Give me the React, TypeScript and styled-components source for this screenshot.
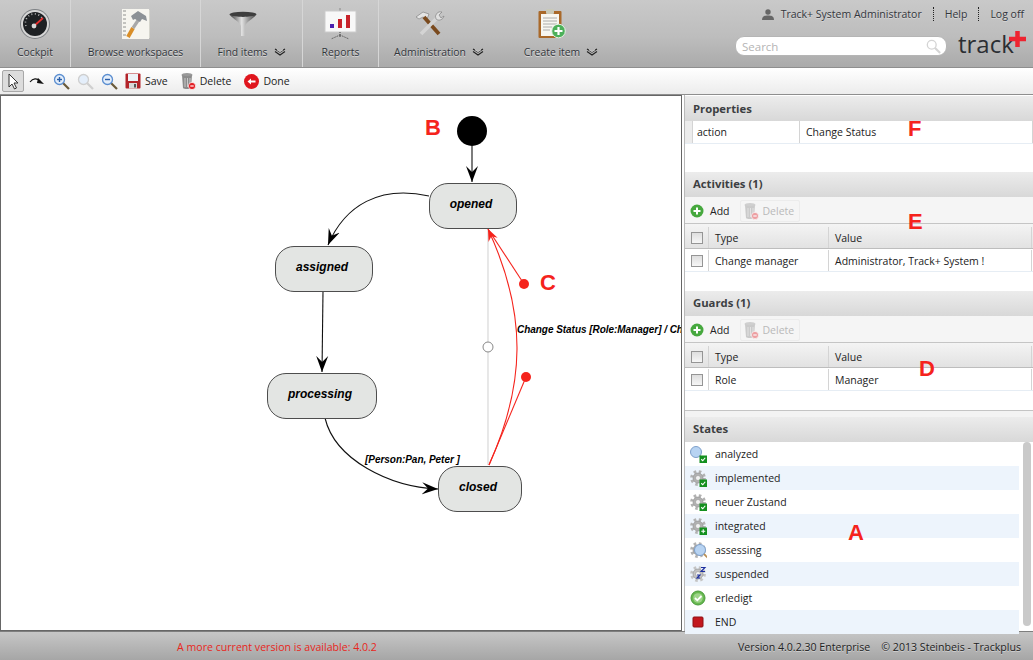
import React from 'react';
import styled, { createGlobalStyle } from 'styled-components';

const GlobalStyle = createGlobalStyle`
  html, body {
    margin: 0;
    padding: 0;
    background: #fff;
  }
  body {
    font-family: "Open Sans", "Liberation Sans", sans-serif;
    font-size: 10.5px;
    color: #222;
  }
`;

const Page = styled.div`
  width: 1033px;
  height: 660px;
  display: flex;
  flex-direction: column;
  overflow: hidden;
`;

/* top bar */
const Header = styled.header`
  height: 67px;
  flex: none;
  display: flex;
  justify-content: space-between;
  background: linear-gradient(#c9c9c9, #bdbdbd 55%, #aaaaaa);
  border-bottom: 1px solid #8e8e8e;
`;

const Nav = styled.nav`
  display: flex;
`;

const NavItem = styled.div<{ $w: number; $sep?: boolean }>`
  width: ${(p) => p.$w}px;
  display: flex;
  flex-direction: column;
  align-items: center;
  box-sizing: border-box;
  padding-top: 8px;
  border-right: ${(p) => (p.$sep ? '1px solid #d6d6d6' : 'none')};
  color: #33363c;
  font-size: 10.4px;
  text-shadow: 0 1px 0 #d8d8d8;
`;

const NavIcon = styled.div<{ $menu?: boolean }>`
  height: 32px;
  display: flex;
  align-items: center;
  justify-content: center;
  padding-right: ${(p) => (p.$menu ? '18px' : '0')};
`;

const NavLabel = styled.div`
  margin-top: 4px;
  height: 16px;
  line-height: 16px;
  display: flex;
  align-items: center;
  gap: 6px;
  white-space: nowrap;
`;

const HeaderRight = styled.div`
  width: 298px;
  display: flex;
  flex-direction: column;
  align-items: flex-end;
  padding-right: 9px;
  box-sizing: border-box;
`;

const UserBar = styled.div`
  display: flex;
  align-items: center;
  height: 14px;
  margin-top: 7px;
  color: #33363c;
  font-size: 10.5px;
  text-shadow: 0 1px 0 #d8d8d8;
`;

const UserLink = styled.span<{ $divider?: boolean }>`
  padding-left: ${(p) => (p.$divider ? '11px' : '0')};
  margin-left: ${(p) => (p.$divider ? '11px' : '0')};
  border-left: ${(p) => (p.$divider ? '1px dotted #222' : 'none')};
  display: flex;
  align-items: center;
  gap: 7px;
`;

const SearchRow = styled.div`
  display: flex;
  align-items: flex-start;
  margin-top: 15px;
  margin-right: -2px;
`;

const SearchBox = styled.div`
  width: 212px;
  height: 20px;
  box-sizing: border-box;
  background: #fff;
  border: 1px solid #b5b5b5;
  border-radius: 9px;
  display: flex;
  align-items: center;
  justify-content: space-between;
  padding: 0 5px 0 6px;
  color: #b4b4b4;
  font-size: 11.5px;
`;

const Logo = styled.div`
  position: relative;
  width: 68px;
  height: 24px;
  margin: -4px 0 0 11px;
  color: #2b2e33;
  font-family: "Open Sans", sans-serif;
  font-size: 24px;
  line-height: 24px;
`;

const LogoPlus = styled.svg`
  position: absolute;
  right: 0;
  top: -1px;
`;

/* second bar */
const SubBar = styled.div`
  height: 27px;
  flex: none;
  display: flex;
  align-items: center;
  padding-left: 2px;
  background: linear-gradient(#ffffff, #ececec);
  border-bottom: 1px solid #8e8e8e;
  box-sizing: border-box;
`;

const ToolBtn = styled.div<{ $active?: boolean }>`
  height: 22px;
  width: ${(p) => (p.$active ? '22px' : '24px')};
  margin-right: ${(p) => (p.$active ? '1px' : '0')};
  box-sizing: border-box;
  display: flex;
  align-items: center;
  justify-content: center;
  border: 1px solid ${(p) => (p.$active ? '#a8a8a8' : 'transparent')};
  border-radius: 2px;
  background: ${(p) => (p.$active ? '#dcdcdc' : 'transparent')};
`;

const TextTool = styled.div<{ $left: number }>`
  height: 22px;
  display: flex;
  align-items: center;
  gap: 4px;
  padding: 0 6px 0 ${(p) => p.$left}px;
  font-size: 10.5px;
  color: #222;
`;

const Main = styled.div`
  flex: 1;
  min-height: 0;
  display: flex;
`;

/* diagram */
const Canvas = styled.div`
  position: relative;
  width: 682px;
  flex: none;
  background: #fff;
  border: 1px solid #666;
  box-sizing: border-box;
  overflow: hidden;
`;

const Edges = styled.svg`
  position: absolute;
  left: 0;
  top: 0;
`;

const StateNode = styled.div<{ $x: number; $y: number; $w: number }>`
  position: absolute;
  left: ${(p) => p.$x}px;
  top: ${(p) => p.$y}px;
  width: ${(p) => p.$w}px;
  height: 46px;
  box-sizing: border-box;
  display: flex;
  align-items: center;
  justify-content: center;
  padding: 0 4px 5px 0;
  background: #e3e5e3;
  border: 1.5px solid #4d4d4d;
  border-radius: 19px;
  font-family: "Liberation Sans", sans-serif;
  font-style: italic;
  font-weight: 700;
  font-size: 12px;
  color: #000;
`;

const EdgeLabel = styled.div<{ $x: number; $y: number; $clip?: boolean }>`
  position: absolute;
  left: ${(p) => p.$x}px;
  top: ${(p) => p.$y}px;
  right: ${(p) => (p.$clip ? '0' : 'auto')};
  overflow: ${(p) => (p.$clip ? 'hidden' : 'visible')};
  font-family: "Liberation Sans", sans-serif;
  font-style: italic;
  font-weight: 700;
  font-size: 10px;
  line-height: 12px;
  letter-spacing: -0.04px;
  white-space: nowrap;
  color: #000;
`;

const Marker = styled.div<{ $x: number; $y: number }>`
  position: absolute;
  left: ${(p) => p.$x}px;
  top: ${(p) => p.$y}px;
  font-family: "Liberation Sans", sans-serif;
  font-weight: 700;
  font-size: 22px;
  line-height: 24px;
  color: #f5231c;
  z-index: 2;
`;

/* right side */
const Side = styled.aside`
  width: 349px;
  margin-left: 2px;
  padding-top: 1px;
  flex: none;
  display: flex;
  flex-direction: column;
  background: #fff;
  border-left: 1px solid #b9b9b9;
  box-sizing: border-box;
`;

const Panel = styled.section<{ $h: number; $rule?: boolean }>`
  height: ${(p) => p.$h}px;
  flex: none;
  box-sizing: border-box;
  display: flex;
  flex-direction: column;
  border-top: ${(p) => (p.$rule ? '1px solid #c4c4c4' : 'none')};
  background: ${(p) => (p.$rule ? '#f3f3f3' : '#fff')};
`;

const PanelHead = styled.div<{ $flat?: boolean }>`
  height: 25px;
  flex: none;
  box-sizing: border-box;
  padding: 0 0 ${(p) => (p.$flat ? '0' : '2px')} 8px;
  display: flex;
  align-items: center;
  font-weight: 700;
  font-size: 11.3px;
  color: #3d3f42;
  background: linear-gradient(#ececec, #d8d8d8);
`;

const PanelTools = styled.div`
  height: 26px;
  flex: none;
  display: flex;
  align-items: center;
  padding: 1px 0 0 4px;
  gap: 9px;
  box-sizing: border-box;
  background: #f5f5f5;
`;

const PanelBtn = styled.div<{ $off?: boolean }>`
  height: 22px;
  box-sizing: border-box;
  display: flex;
  align-items: center;
  gap: ${(p) => (p.$off ? '4px' : '6px')};
  padding: 0 ${(p) => (p.$off ? '5px' : '0')} 0 ${(p) => (p.$off ? '2px' : '0')};
  font-size: 10.5px;
  color: ${(p) => (p.$off ? '#b9b9b9' : '#222')};
  border: 1px solid ${(p) => (p.$off ? '#ececec' : 'transparent')};
  border-radius: 2px;
`;

const GridRow = styled.div<{ $head?: boolean; $cols: string; $nudge?: boolean }>`
  display: grid;
  grid-template-columns: ${(p) => p.$cols};
  height: ${(p) => (p.$head ? '26px' : '23px')};
  flex: none;
  box-sizing: border-box;
  padding-top: ${(p) => (p.$head ? '3px' : p.$nudge ? '1px' : '0')};
  background: ${(p) => (p.$head ? 'linear-gradient(#f4f4f4, #e2e2e2)' : '#fff')};
  border-top: ${(p) => (p.$head ? '1px solid #c5c5c5' : 'none')};
  border-bottom: 1px solid ${(p) => (p.$head ? '#bdbdbd' : '#e6edf4')};
  font-size: 10.5px;
  color: #222;
`;

const Cell = styled.div<{ $center?: boolean; $gutter?: boolean; $tight?: boolean }>`
  display: flex;
  align-items: center;
  justify-content: ${(p) => (p.$center ? 'center' : 'flex-start')};
  padding-left: ${(p) => (p.$center || p.$gutter ? '0' : p.$tight ? '4px' : '6px')};
  border-right: 1px solid #d4d4d4;
  background: ${(p) => (p.$gutter ? '#ececec' : 'transparent')};
  white-space: nowrap;
  overflow: hidden;
`;

const CheckBox = styled.span`
  width: 10px;
  height: 10px;
  display: block;
  background: linear-gradient(#dedede, #f6f6f6);
  border: 1.5px solid #959595;
`;

const StateList = styled.div`
  position: relative;
  flex: 1;
  min-height: 0;
  padding-right: 14px;
`;

const StateRow = styled.div<{ $alt: boolean }>`
  height: 24px;
  display: flex;
  align-items: center;
  background: ${(p) => (p.$alt ? '#edf4fc' : '#fff')};
  font-size: 10.5px;
  color: #222;
`;

const StateIcon = styled.div`
  width: 30px;
  padding-left: 5px;
  box-sizing: border-box;
  display: flex;
  align-items: center;
`;

const Scrollbar = styled.div`
  position: absolute;
  right: 2px;
  top: 0;
  bottom: 4px;
  width: 8px;
  border-radius: 4px;
  background: #c9c9c9;
`;

/* footer */
const Footer = styled.footer`
  height: 29px;
  flex: none;
  box-sizing: border-box;
  display: flex;
  align-items: center;
  justify-content: space-between;
  padding: 2px 12px 0 177px;
  background: linear-gradient(#c6c6c6, #a6a6a6);
  border-top: 1px solid #7e7e7e;
  font-size: 10.6px;
  color: #222;
  text-shadow: 0 1px 0 #d0d0d0;
`;

const UpdateNote = styled.span`
  color: #e8261c;
  text-shadow: none;
`;

const FooterRight = styled.div`
  display: flex;
  gap: 11px;
`;

const Chevron = () => (
  <svg width="12" height="8" viewBox="0 0 12 8">
    <path d="M1 1l5 3 5-3M1 3.5l5 3.5 5-3.5" fill="none" stroke="#222" strokeWidth="1.1" />
    <path d="M3 1.8l3 1.8 3-1.8" fill="none" stroke="#fff" strokeWidth="0.8" />
  </svg>
);

const CockpitIcon = () => (
  <svg width="32" height="32" viewBox="0 0 32 32">
    <circle cx="16" cy="16" r="15" fill="#7d8084" />
    <circle cx="16" cy="16" r="14" fill="#d6d6d6" />
    <circle cx="16" cy="16" r="12" fill="#1e2124" />
    <path d="M7 18a9 9 0 0 1 16-8" fill="none" stroke="#bbb" strokeWidth="1.6" strokeDasharray="1 2.5" />
    <path d="M15 18l9-8" stroke="#e53030" strokeWidth="1.8" />
    <circle cx="15" cy="18" r="2.4" fill="#d8d8d8" />
  </svg>
);

const HammerBookIcon = () => (
  <svg width="30" height="32" viewBox="0 0 30 32">
    <rect x="1" y="1" width="27" height="30" fill="#f6f5ef" />
    <path d="M28.500 2v28" stroke="#d5d5cd" strokeWidth="1" />
    <path d="M2 3h3M2 7h3M2 11h3M2 15h3M2 19h3M2 23h3M2 27h3" stroke="#777" strokeWidth="0.8" />
    <path d="M7 29L12 20" stroke="#d98e28" strokeWidth="3.800" />
    <path d="M12 20L18 11" stroke="#a8a8a8" strokeWidth="3.200" />
    <path d="M10 8l7-5 8 5 1 5-5-2-2 3-5-3-2 1z" fill="#8c9196" />
  </svg>
);

const FunnelIcon = () => (
  <svg width="28" height="26" viewBox="0 0 28 26">
    <defs>
      <linearGradient id="fn" x1="0" x2="1">
        <stop offset="0" stopColor="#3c3c3c" />
        <stop offset="0.45" stopColor="#e2e2e2" />
        <stop offset="1" stopColor="#444" />
      </linearGradient>
    </defs>
    <ellipse cx="14" cy="3.500" rx="13.500" ry="2.800" fill="#3e3e3e" />
    <path d="M1 4c3 4 10 7 11 11v10h4V15c1-4 8-7 11-11-4 2.500-22 2.500-26 0z" fill="url(#fn)" />
  </svg>
);

const ReportIcon = () => (
  <svg width="33" height="32" viewBox="0 0 33 32">
    <path d="M16 0v3" stroke="#888" />
    <rect x="1" y="3" width="31" height="21" fill="#f8f8f8" stroke="#ccc" />
    <rect x="6" y="16" width="4" height="4" fill="#4a22b0" />
    <rect x="14" y="11" width="4" height="9" fill="#c8232a" />
    <rect x="22" y="7" width="4" height="13" fill="#c8232a" />
    <path d="M16 24v5M16 27L7 31M16 27l9 4" stroke="#444" strokeDasharray="1 1" fill="none" />
  </svg>
);

const ToolsIcon = () => (
  <svg width="31" height="26" viewBox="0 0 31 26">
    <path d="M1 6l7-5 6 2-2 5-4-2-4 2z" fill="#e4e4e4" stroke="#777" strokeWidth="0.6" />
    <path d="M9 6l15 17" stroke="#7a4a1e" strokeWidth="3.800" />
    <path d="M6 23L22 7" stroke="#d4d4d4" strokeWidth="3.800" />
    <path d="M21 8a5 5 0 0 1 6-7l-3 3 2 3 3-2a5 5 0 0 1-8 3z" fill="#e0e0e0" stroke="#777" strokeWidth="0.6" />
  </svg>
);

const ClipboardIcon = () => (
  <svg width="28" height="32" viewBox="0 0 28 32">
    <rect x="0.500" y="3" width="23" height="27" rx="1" fill="#a9692a" />
    <rect x="3" y="6" width="18" height="22" fill="#f7f7f2" />
    <rect x="8" y="1" width="8" height="5" rx="1" fill="#c9c9b8" />
    <path d="M5 10h14M5 13h14M5 16h14M5 19h9M5 22h7" stroke="#9a9a9a" strokeWidth="0.8" />
    <circle cx="20.500" cy="23" r="6.800" fill="#4cb05a" stroke="#e6f3e6" />
    <path d="M20.500 19v8M16.500 23h8" stroke="#fff" strokeWidth="2.200" />
  </svg>
);

const Person = () => (
  <svg width="12" height="11" viewBox="0 0 12 11">
    <circle cx="6" cy="3" r="2.700" fill="#666" />
    <path d="M0 11c0-4 3-4.500 6-4.500S12 7 12 11z" fill="#666" />
  </svg>
);

const Magnifier = ({ sign, color = '#5b8ed0', handle = '#6a5a3a' }: { sign?: '+' | '-'; color?: string; handle?: string }) => (
  <svg width="17" height="17" viewBox="0 0 17 17">
    <path d="M10 10l6 6" stroke={handle} strokeWidth="2.200" />
    <circle cx="6.500" cy="6.500" r="5" fill="#e4eefa" stroke={color} strokeWidth="1.300" />
    {sign && <path d="M4 6.500h5" stroke="#2b5fa8" strokeWidth="1.400" />}
    {sign === '+' && <path d="M6.500 4v5" stroke="#2b5fa8" strokeWidth="1.400" />}
  </svg>
);

const SearchGlass = () => (
  <svg width="15" height="15" viewBox="0 0 17 17">
    <path d="M10 10l6 6" stroke="#d4d4d4" strokeWidth="2.400" />
    <circle cx="6.500" cy="6.500" r="5" fill="#fff" stroke="#d4d4d4" strokeWidth="1.500" />
  </svg>
);

const TrashIcon = ({ off }: { off?: boolean }) => (
  <svg width="16" height="18" viewBox="0 0 16 18" opacity={off ? 0.4 : 1}>
    <ellipse cx="7" cy="3" rx="5.500" ry="2" fill="#999" />
    <path d="M2 3l1 13c1 1.400 7 1.400 8 0l1-13c-2 1.500-8 1.500-10 0z" fill="#8b8b8b" />
    <path d="M5 6v9M7.500 6v9M10 6v9" stroke="#d0d0d0" strokeWidth="0.900" />
    <circle cx="12" cy="14" r="3.600" fill="#e21f26" stroke="#fff" strokeWidth="0.700" />
    <path d="M10.300 14h3.400" stroke="#fff" strokeWidth="1.200" />
  </svg>
);

const AddIcon = () => (
  <svg width="14" height="14" viewBox="0 0 14 14">
    <circle cx="7" cy="7" r="6.500" fill="#46a83e" />
    <path d="M7 3.500v7M3.500 7h7" stroke="#fff" strokeWidth="2" />
  </svg>
);

const Gear = ({ fill = '#b2b2b2' }: { fill?: string }) => (
  <g>
    <circle cx="8" cy="8" r="6.400" fill="none" stroke={fill} strokeWidth="3" strokeDasharray="2.500 2.530" />
    <circle cx="8" cy="8" r="5" fill={fill} stroke="#8a8a8a" strokeWidth="0.600" />
    <circle cx="8" cy="8" r="2.500" fill="#f2f2f2" stroke="#8a8a8a" strokeWidth="0.500" />
  </g>
);

const Badge = ({ plus }: { plus?: boolean }) => (
  <g>
    <rect x="9.500" y="9.500" width="7.500" height="7.500" fill="#14901f" />
    <path d={plus ? 'M13.250 11.250v4M11.250 13.250h4' : 'M11.250 13.250l1.500 1.500 2.500-3'} fill="none" stroke="#fff" strokeWidth="1.100" />
  </g>
);

const Lens = () => (
  <g>
    <path d="M9 9l5 5" stroke="#b98f55" strokeWidth="1.800" />
    <circle cx="6" cy="6" r="5.500" fill="#b7d3f2" stroke="#7d9fca" />
  </g>
);

const StateGlyph = ({ kind }: { kind: string }) => (
  <svg width="17" height="17" viewBox="0 0 17 17">
    {kind === 'analyzed' && (
      <>
        <Lens />
        <Badge />
      </>
    )}
    {kind === 'done' && (
      <>
        <Gear />
        <Badge />
      </>
    )}
    {kind === 'integrated' && (
      <>
        <Gear />
        <Badge plus />
      </>
    )}
    {kind === 'assessing' && (
      <>
        <Gear />
        <g transform="translate(4 2)">
          <Lens />
        </g>
      </>
    )}
    {kind === 'suspended' && (
      <>
        <Gear fill="#c4c4c4" />
        <path d="M11 1.500h4l-4 4h4M7 9h3l-3 3h3" fill="none" stroke="#1c2fa0" strokeWidth="1.100" />
      </>
    )}
    {kind === 'erledigt' && (
      <>
        <circle cx="8" cy="8" r="7" fill="#67b84f" stroke="#4a9a3c" />
        <circle cx="8" cy="8" r="4.800" fill="#9ed48a" />
        <path d="M5 8l2.300 2.300L11.500 6" fill="none" stroke="#fff" strokeWidth="1.800" />
      </>
    )}
    {kind === 'end' && <rect x="3" y="3" width="10" height="10" rx="1" fill="#c3171d" stroke="#8e1014" />}
  </svg>
);

const CHECK_COLS = '24px 120px 203px';
const PROP_COLS = '8px 107px 233px';

const states = [
  ['analyzed', 'analyzed'],
  ['implemented', 'done'],
  ['neuer Zustand', 'done'],
  ['integrated', 'integrated'],
  ['assessing', 'assessing'],
  ['suspended', 'suspended'],
  ['erledigt', 'erledigt'],
  ['END', 'end'],
];

function DetailPanel({ title, type, value, h }: { title: string; type: string; value: string; h: number }) {
  return (
    <Panel $h={h}>
      <PanelHead>{title}</PanelHead>
      <PanelTools>
        <PanelBtn>
          <AddIcon />
          <span>Add</span>
        </PanelBtn>
        <PanelBtn $off>
          <TrashIcon off />
          <span>Delete</span>
        </PanelBtn>
      </PanelTools>
      <GridRow $head $cols={CHECK_COLS}>
        <Cell $center><CheckBox /></Cell>
        <Cell>Type</Cell>
        <Cell>Value</Cell>
      </GridRow>
      <GridRow $nudge $cols={CHECK_COLS}>
        <Cell $center><CheckBox /></Cell>
        <Cell>{type}</Cell>
        <Cell>{value}</Cell>
      </GridRow>
    </Panel>
  );
}

function Diagram() {
  return (
    <Canvas>
      <Edges width="680" height="534" viewBox="1 96 680 534">
        <defs>
          <marker id="ah" markerWidth="18" markerHeight="14" refX="16" refY="6.500" orient="auto" markerUnits="userSpaceOnUse">
            <path d="M0 0.500L16 6.500 0 12.500 6 6.500z" fill="#000" />
          </marker>
          <marker id="ahr" markerWidth="14" markerHeight="12" refX="12" refY="5" orient="auto" markerUnits="userSpaceOnUse">
            <path d="M0 0L12 5 0 10 4 5z" fill="#f5231c" />
          </marker>
        </defs>
        <circle cx="472" cy="131" r="15" fill="#000" />
        <g fill="none" stroke="#111" strokeWidth="1.100">
          <path d="M472 146V182" markerEnd="url(#ah)" />
          <path d="M429 196C380 185 345 205 328 245" markerEnd="url(#ah)" />
          <path d="M323 291L322 372" markerEnd="url(#ah)" />
          <path d="M325 418C335 460 390 487 438 489" markerEnd="url(#ah)" />
        </g>
        <path d="M488 230V465" stroke="#d8d8d8" strokeWidth="1.200" />
        <circle cx="488" cy="347" r="5" fill="#fff" stroke="#888" />
        <g fill="none" stroke="#f5231c" strokeWidth="1.100">
          <path d="M489 465C525 385 528 315 488 229" markerEnd="url(#ahr)" />
          <path d="M489 465L526 377" />
          <path d="M524 284L488 229" />
        </g>
        <circle cx="526" cy="377" r="5" fill="#f5231c" />
        <circle cx="524" cy="284" r="5" fill="#f5231c" />
      </Edges>
      <StateNode $x={428} $y={87} $w={88}>opened</StateNode>
      <StateNode $x={274} $y={150} $w={98}>assigned</StateNode>
      <StateNode $x={266} $y={277} $w={110}>processing</StateNode>
      <StateNode $x={437} $y={370} $w={84}>closed</StateNode>
      <EdgeLabel $clip $x={516} $y={228}>Change Status [Role:Manager] / Ch</EdgeLabel>
      <EdgeLabel $x={364} $y={358}>[Person:Pan, Peter ]</EdgeLabel>
      <Marker $x={424} $y={20}>B</Marker>
      <Marker $x={539} $y={175}>C</Marker>
    </Canvas>
  );
}

export default function App() {
  return (
    <Page>
      <GlobalStyle />
      <Header>
        <Nav>
          <NavItem $w={71} $sep>
            <NavIcon><CockpitIcon /></NavIcon>
            <NavLabel>Cockpit</NavLabel>
          </NavItem>
          <NavItem $w={130} $sep>
            <NavIcon><HammerBookIcon /></NavIcon>
            <NavLabel>Browse workspaces</NavLabel>
          </NavItem>
          <NavItem $w={102} $sep>
            <NavIcon $menu><FunnelIcon /></NavIcon>
            <NavLabel>Find items <Chevron /></NavLabel>
          </NavItem>
          <NavItem $w={76} $sep>
            <NavIcon><ReportIcon /></NavIcon>
            <NavLabel>Reports</NavLabel>
          </NavItem>
          <NavItem $w={120}>
            <NavIcon $menu><ToolsIcon /></NavIcon>
            <NavLabel>Administration <Chevron /></NavLabel>
          </NavItem>
          <NavItem $w={124}>
            <NavIcon $menu><ClipboardIcon /></NavIcon>
            <NavLabel>Create item <Chevron /></NavLabel>
          </NavItem>
        </Nav>
        <HeaderRight>
          <UserBar>
            <UserLink><Person />Track+ System Administrator</UserLink>
            <UserLink $divider>Help</UserLink>
            <UserLink $divider>Log off</UserLink>
          </UserBar>
          <SearchRow>
            <SearchBox>
              <span>Search</span>
              <SearchGlass />
            </SearchBox>
            <Logo>
              track
              <LogoPlus width="17" height="16" viewBox="0 0 17 16">
                <path d="M8.500 0v16M0 8h17" stroke="#ee2430" strokeWidth="4.500" />
              </LogoPlus>
            </Logo>
          </SearchRow>
        </HeaderRight>
      </Header>

      <SubBar>
        <ToolBtn $active>
          <svg width="14" height="17" viewBox="0 0 14 17">
            <path d="M3 1v13l3-3 2.500 5 2-1-2.500-5h4z" fill="#fff" stroke="#333" />
          </svg>
        </ToolBtn>
        <ToolBtn>
          <svg width="16" height="10" viewBox="0 0 16 10">
            <path d="M1 6c3-4 7-4 10-1" fill="none" stroke="#111" strokeWidth="1.200" />
            <path d="M9 2l6 6-7-1z" fill="#111" />
          </svg>
        </ToolBtn>
        <ToolBtn><Magnifier sign="+" /></ToolBtn>
        <ToolBtn><Magnifier color="#cfcfcf" handle="#cfcfcf" /></ToolBtn>
        <ToolBtn><Magnifier sign="-" /></ToolBtn>
        <TextTool $left={4}>
          <svg width="16" height="16" viewBox="0 0 16 16">
            <rect x="0.500" y="0.500" width="15" height="15" rx="1" fill="#b3242a" />
            <rect x="3" y="1" width="10" height="7" fill="#eef3f8" />
            <rect x="4" y="10" width="8" height="5.500" fill="#d8d8d8" />
            <rect x="9" y="11" width="2" height="3.500" fill="#555" />
          </svg>
          Save
        </TextTool>
        <TextTool $left={6}><TrashIcon />Delete</TextTool>
        <TextTool $left={7}>
          <svg width="15" height="15" viewBox="0 0 15 15">
            <circle cx="7.500" cy="7.500" r="7.500" fill="#e0161e" />
            <path d="M3.500 7.500l3.500-3v2h4.500v2H7v2z" fill="#fff" />
          </svg>
          Done
        </TextTool>
      </SubBar>

      <Main>
        <Diagram />
        <Side>
          <Panel $h={76}>
            <PanelHead $flat>Properties</PanelHead>
            <GridRow $cols={PROP_COLS}>
              <Cell $gutter />
              <Cell $tight>action</Cell>
              <Cell>Change Status</Cell>
            </GridRow>
          </Panel>
          <DetailPanel title="Activities (1)" type="Change manager" value="Administrator, Track+ System !" h={119} />
          <DetailPanel title="Guards (1)" type="Role" value="Manager" h={119} />
          <Panel $h={7} $rule />
          <Panel $h={213}>
            <PanelHead>States</PanelHead>
            <StateList>
              {states.map(([name, kind], i) => (
                <StateRow key={name} $alt={i % 2 === 1}>
                  <StateIcon><StateGlyph kind={kind} /></StateIcon>
                  {name}
                </StateRow>
              ))}
              <Scrollbar />
            </StateList>
          </Panel>
        </Side>
      </Main>

      <Footer>
        <UpdateNote>A more current version is available: 4.0.2</UpdateNote>
        <FooterRight>
          <span>Version 4.0.2.30 Enterprise</span>
          <span>© 2013 Steinbeis - Trackplus</span>
        </FooterRight>
      </Footer>

      <Marker $x={908} $y={117}>F</Marker>
      <Marker $x={908} $y={210}>E</Marker>
      <Marker $x={919} $y={357}>D</Marker>
      <Marker $x={848} $y={521}>A</Marker>
    </Page>
  );
}
